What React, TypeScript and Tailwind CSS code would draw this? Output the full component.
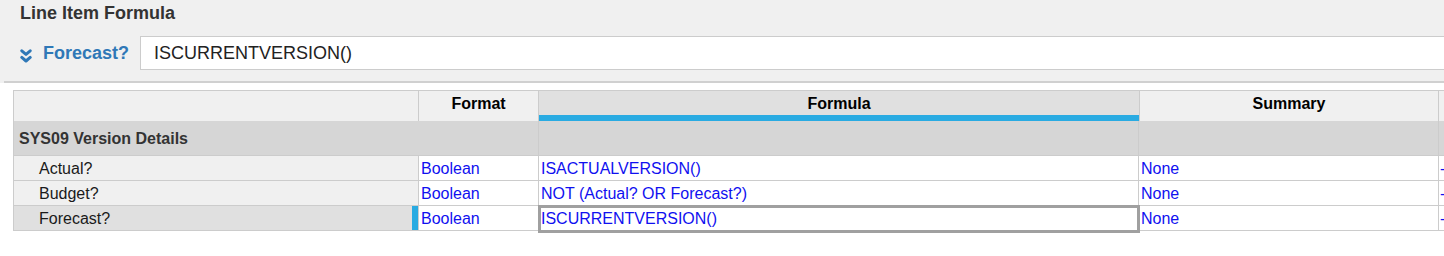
import React from 'react';

const rows = [
  { name: 'Actual?', format: 'Boolean', formula: 'ISACTUALVERSION()', summary: 'None', selected: false },
  { name: 'Budget?', format: 'Boolean', formula: 'NOT (Actual? OR Forecast?)', summary: 'None', selected: false },
  { name: 'Forecast?', format: 'Boolean', formula: 'ISCURRENTVERSION()', summary: 'None', selected: true },
];

function ChevronsDown() {
  return (
    <svg className="shrink-0 mt-[5px]" width="12" height="14" viewBox="0 0 12 14" fill="none" stroke="#2f78b7" strokeWidth="3" strokeLinecap="round" strokeLinejoin="round">
      <polyline points="1.8,1.8 6,5.4 10.2,1.8" />
      <polyline points="1.8,8.4 6,12 10.2,8.4" />
    </svg>
  );
}

function App() {
  return (
    <div className="w-[1444px] h-[256px] overflow-hidden bg-white font-['Liberation_Sans',Arial,sans-serif]">
      {/* formula bar */}
      <div className="bg-[#f0f0f0] pl-[4px]">
        <div className="border-b-2 border-[#d0d0d0] pl-[16px] pt-[3px] pb-[11px]">
          <div className="text-[18px] leading-[20px] font-bold text-[#333]">Line Item Formula</div>
          <div className="flex items-center mt-[13px]">
            <ChevronsDown />
            <span className="shrink-0 ml-[11px] text-[18px] font-bold text-[#2f78b7] leading-[20px]">Forecast?</span>
            <div className="ml-[11px] w-[1320px] shrink-0 h-[34px] bg-white border border-[#cccccc] pl-[13px] flex items-center text-[18px] text-[#222]">
              ISCURRENTVERSION()
            </div>
          </div>
        </div>
      </div>

      {/* grid */}
      <div className="ml-[13px] mt-[7px] border-l border-t border-b border-[#cccccc] grid grid-cols-[405px_120px_600px_300px_1fr] text-[16px] leading-[18px]">
        {/* header */}
        <div className="h-[30px] bg-[#f0f0f0] border-r border-[#cccccc]" />
        <div className="h-[30px] bg-[#f0f0f0] border-r border-[#cccccc] pt-[4px] text-center font-bold text-black">Format</div>
        <div className="h-[30px] bg-[#e0e0e0] border-b-[6px] border-b-[#29abe2] pt-[4px] text-center font-bold text-black">Formula</div>
        <div className="h-[30px] bg-[#f0f0f0] border-r border-l border-[#cccccc] pt-[4px] text-center font-bold text-black">Summary</div>
        <div className="h-[30px] bg-[#f0f0f0]" />

        {/* section */}
        <div className="col-span-2 h-[34px] bg-[#d6d6d6] border-r border-[#cccccc] pl-[5px] pt-[2px] flex items-center font-bold text-[#333]">
          SYS09 Version Details
        </div>
        <div className="h-[34px] bg-[#d6d6d6] border-r border-[#cccccc]" />
        <div className="h-[34px] bg-[#d6d6d6] border-r border-[#cccccc]" />
        <div className="h-[34px] bg-[#d6d6d6]" />

        {rows.map((r) => (
          <React.Fragment key={r.name}>
            <div className={`h-[25px] border-t border-r border-[#cccccc] flex items-stretch justify-between ${r.selected ? 'bg-[#e0e0e0]' : 'bg-[#f0f0f0]'}`}>
              <span className="pl-[25px] pt-[2px] self-center text-[#1a1a1a]">{r.name}</span>
              {r.selected && <span className="w-[6px] bg-[#29abe2]" />}
            </div>
            <div className="h-[25px] border-t border-r border-[#cccccc] bg-white pl-[2px] pt-[2px] flex items-center text-[#1010f0]">{r.format}</div>
            <div className="relative h-[25px] border-t border-r border-[#cccccc] bg-white pl-[2px] pt-[2px] flex items-center text-[#1010f0]">
              {r.formula}
              {r.selected && <div className="absolute -left-[1px] -top-[1px] -right-[2px] -bottom-[3px] border-[3px] border-[#a0a0a0] pointer-events-none" />}
            </div>
            <div className="h-[25px] border-t border-r border-[#cccccc] bg-white pl-[2px] pt-[2px] flex items-center text-[#1010f0]">{r.summary}</div>
            <div className="h-[25px] border-t border-[#cccccc] bg-white pl-[1px] pt-[2px] flex items-center text-[#1010f0]">-</div>
          </React.Fragment>
        ))}
      </div>
    </div>
  );
}

export default App;
